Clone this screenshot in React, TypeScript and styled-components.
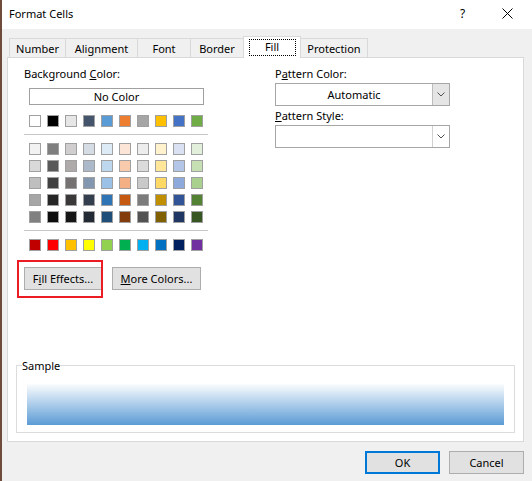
import React from "react";
import styled, { createGlobalStyle } from "styled-components";

const Global = createGlobalStyle`
  html, body { margin: 0; padding: 0; background: #f0f0f0; }
  body { font-family: "Noto Sans", "Open Sans", sans-serif; font-size: 11px; color: #000; }
  * { box-sizing: border-box; }
`;

const Window = styled.div`
  width: 532px;
  height: 481px;
  background: #f0f0f0;
  border-left: 2px solid #6e4c3b;
  display: flex;
  flex-direction: column;
  overflow: hidden;
`;

const TitleBar = styled.div`
  height: 29px;
  flex: none;
  background: #fff;
  display: flex;
  align-items: center;
  padding: 0 2px 2px 7px;
`;

const Title = styled.div`
  flex: 1;
  line-height: 15px;
`;

const CaptionButton = styled.div`
  width: 45px;
  height: 100%;
  display: flex;
  align-items: center;
  justify-content: center;
  font-size: 12px;
  line-height: 15px;
`;

const Body = styled.div`
  flex: 1;
  display: flex;
  flex-direction: column;
  padding: 7px 8px 0 5px;
`;

const TabRow = styled.div`
  display: flex;
  align-items: flex-end;
  height: 21px;
  padding-left: 2px;
`;

const Tab = styled.div<{ $w: number; $active?: boolean }>`
  width: ${(p) => p.$w}px;
  height: ${(p) => (p.$active ? 22 : 19)}px;
  border: 1px solid #d9d9d9;
  border-bottom: none;
  background: ${(p) => (p.$active ? "#fff" : "#f0f0f0")};
  display: flex;
  justify-content: center;
  align-items: flex-start;
  padding-top: 2px;
  line-height: 15px;
  & + & { margin-left: -1px; }
  ${(p) => (p.$active ? "position: relative; z-index: 1; margin-bottom: -1px;" : "")}
`;

const FocusLabel = styled.span`
  width: 47px;
  height: 17px;
  border: 1px dotted #000;
  line-height: 13px;
  text-align: center;
`;

const Panel = styled.div`
  height: 385px;
  background: #fff;
  border: 1px solid #d9d9d9;
  display: flex;
  flex-direction: column;
`;

const Columns = styled.div`
  display: flex;
  gap: 67px;
  padding: 8px 0 0 16px;
`;

const LeftCol = styled.div`
  width: 184px;
  display: flex;
  flex-direction: column;
`;

const RightCol = styled.div`
  width: 175px;
  display: flex;
  flex-direction: column;
`;

const Label = styled.div<{ $gapTop?: number }>`
  line-height: 15px;
  margin-top: ${(p) => p.$gapTop ?? 0}px;
`;

const NoColorBox = styled.div`
  margin: 7px 0 0 5px;
  width: 175px;
  height: 17px;
  border: 1px solid #a0a0a0;
  line-height: 15px;
  text-align: center;
`;

const SwatchGrid = styled.div<{ $top?: number }>`
  display: grid;
  grid-template-columns: repeat(10, 12px);
  column-gap: 6px;
  row-gap: 5px;
  margin: ${(p) => p.$top ?? 0}px 0 0 5px;
`;

const Swatch = styled.div<{ $c: string }>`
  width: 12px;
  height: 12px;
  background: ${(p) => p.$c};
  border: 1px solid #a0a0a0;
`;

const Separator = styled.div`
  height: 1px;
  background: #c6c6c6;
  margin: 7px 0 8px;
`;

const ButtonRow = styled.div`
  display: flex;
  gap: 10px;
  margin-top: 16px;
`;

const Highlighted = styled.div`
  position: relative;
  display: flex;
`;

const RedMark = styled.div`
  position: absolute;
  left: -7px;
  top: -7px;
  width: 86px;
  height: 38px;
  border: 2px solid #ec1c24;
  pointer-events: none;
`;

const Button = styled.div<{ $w: number; $default?: boolean }>`
  width: ${(p) => p.$w}px;
  height: 23px;
  background: #e1e1e1;
  border: ${(p) => (p.$default ? "2px solid #0078d7" : "1px solid #adadad")};
  display: flex;
  align-items: center;
  justify-content: center;
  line-height: 15px;
`;

const Combo = styled.div`
  margin-top: 2px;
  height: 23px;
  border: 1px solid #a6a6a6;
  background: #fff;
  display: flex;
`;

const ComboText = styled.div`
  flex: 1;
  line-height: 21px;
  text-align: center;
`;

const DropButton = styled.div<{ $filled?: boolean }>`
  width: 17px;
  border-left: 1px solid ${(p) => (p.$filled ? "#bcbcbc" : "#d0d0d0")};
  background: ${(p) => (p.$filled ? "#e5e5e5" : "#fff")};
  display: flex;
  align-items: center;
  justify-content: center;
`;

const SampleGroup = styled.fieldset`
  margin: auto 8px 8px 8px;
  padding: 0 10px 7px 5px;
  border: 1px solid #dcdcdc;
  min-width: 0;
`;

const SampleLegend = styled.legend`
  padding: 0;
  line-height: 15px;
`;

const Gradient = styled.div`
  margin: 10px 0 0 5px;
  height: 42px;
  background: linear-gradient(to bottom, #ffffff 0%, #5b9bd5 100%);
`;

const Footer = styled.div`
  display: flex;
  justify-content: flex-end;
  gap: 9px;
  margin-top: 9px;
`;

const themeRow = ["#ffffff", "#000000", "#e7e6e6", "#44546a", "#5b9bd5", "#ed7d31", "#a5a5a5", "#ffc000", "#4472c4", "#70ad47"];
const tints = [
  ["#f2f2f2", "#7f7f7f", "#d0cece", "#d6dce4", "#ddebf7", "#fce4d6", "#ededed", "#fff2cc", "#d9e1f2", "#e2efda"],
  ["#d9d9d9", "#595959", "#aeaaaa", "#acb9ca", "#bdd7ee", "#f8cbad", "#dbdbdb", "#ffe699", "#b4c6e7", "#c6e0b4"],
  ["#bfbfbf", "#404040", "#757171", "#8497b0", "#9bc2e6", "#f4b084", "#c9c9c9", "#ffd966", "#8ea9db", "#a9d08e"],
  ["#a6a6a6", "#262626", "#3a3838", "#333f4f", "#2f75b5", "#c65911", "#7b7b7b", "#bf8f00", "#305496", "#548235"],
  ["#808080", "#0d0d0d", "#161616", "#222b35", "#1f4e78", "#833c0c", "#525252", "#806000", "#203764", "#375623"],
];
const standard = ["#c00000", "#ff0000", "#ffc000", "#ffff00", "#92d050", "#00b050", "#00b0f0", "#0070c0", "#002060", "#7030a0"];

const tabs: { label: string; w: number }[] = [
  { label: "Number", w: 57 },
  { label: "Alignment", w: 73 },
  { label: "Font", w: 54 },
  { label: "Border", w: 54 },
  { label: "Fill", w: 58 },
  { label: "Protection", w: 68 },
];

const Chevron = () => (
  <svg width="8" height="5" viewBox="0 0 8 5">
    <polyline points="0.5,0.5 4,4 7.5,0.5" fill="none" stroke="#505050" strokeWidth="1" />
  </svg>
);

const CloseIcon = () => (
  <svg width="11" height="11" viewBox="0 0 11 11">
    <path d="M0.5 0.5 L10.5 10.5 M10.5 0.5 L0.5 10.5" stroke="#000" strokeWidth="1" fill="none" />
  </svg>
);

export default function App() {
  return (
    <>
      <Global />
      <Window>
        <TitleBar>
          <Title>Format Cells</Title>
          <CaptionButton>?</CaptionButton>
          <CaptionButton>
            <CloseIcon />
          </CaptionButton>
        </TitleBar>
        <Body>
          <TabRow>
            {tabs.map((t) => (
              <Tab key={t.label} $w={t.w} $active={t.label === "Fill"}>
                {t.label === "Fill" ? <FocusLabel>{t.label}</FocusLabel> : t.label}
              </Tab>
            ))}
          </TabRow>
          <Panel>
            <Columns>
              <LeftCol>
                <Label>
                  Background <u>C</u>olor:
                </Label>
                <NoColorBox>No Color</NoColorBox>
                <SwatchGrid $top={10}>
                  {themeRow.map((c, i) => (
                    <Swatch key={i} $c={c} />
                  ))}
                </SwatchGrid>
                <Separator />
                <SwatchGrid>
                  {tints.flat().map((c, i) => (
                    <Swatch key={i} $c={c} />
                  ))}
                </SwatchGrid>
                <Separator />
                <SwatchGrid>
                  {standard.map((c, i) => (
                    <Swatch key={i} $c={c} />
                  ))}
                </SwatchGrid>
                <ButtonRow>
                  <Highlighted>
                    <Button $w={78}>
                      <span>
                        F<u>i</u>ll Effects...
                      </span>
                    </Button>
                    <RedMark />
                  </Highlighted>
                  <Button $w={89}>
                    <span>
                      <u>M</u>ore Colors...
                    </span>
                  </Button>
                </ButtonRow>
              </LeftCol>
              <RightCol>
                <Label>
                  P<u>a</u>ttern Color:
                </Label>
                <Combo>
                  <ComboText>Automatic</ComboText>
                  <DropButton $filled>
                    <Chevron />
                  </DropButton>
                </Combo>
                <Label $gapTop={2}>
                  <u>P</u>attern Style:
                </Label>
                <Combo>
                  <ComboText />
                  <DropButton>
                    <Chevron />
                  </DropButton>
                </Combo>
              </RightCol>
            </Columns>
            <SampleGroup>
              <SampleLegend>Sample</SampleLegend>
              <Gradient />
            </SampleGroup>
          </Panel>
          <Footer>
            <Button $w={75} $default>
              OK
            </Button>
            <Button $w={75}>Cancel</Button>
          </Footer>
        </Body>
      </Window>
    </>
  );
}
